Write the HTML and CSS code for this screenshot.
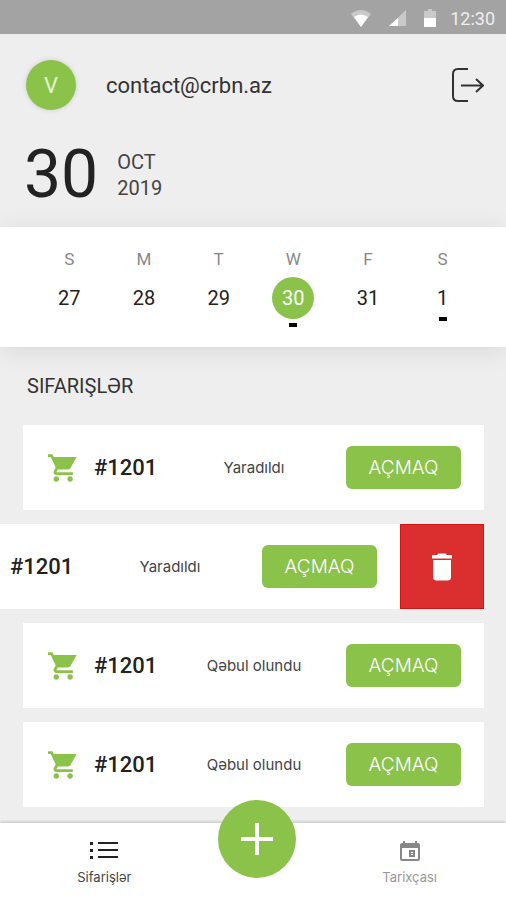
FILE: index.html
```html
<!DOCTYPE html>
<html lang="az">
<head>
  <meta charset="UTF-8" />
  <meta name="viewport" content="width=device-width, initial-scale=1.0"/>
  <title>Sifarişlər</title>
  <link rel="stylesheet" href="styles.css">
</head>
<body>
  <!-- shared icons -->
  <svg class="sprite" aria-hidden="true">
    <symbol id="cart" viewBox="1 2 21 20">
      <path d="M7 18c-1.100 0-1.990.9-1.990 2S5.900 22 7 22s2-.9 2-2-.9-2-2-2zM1 2v2h2l3.600 7.590-1.350 2.450c-.16.280-.25.610-.25.960 0 1.100.9 2 2 2h12v-2H7.420c-.14 0-.25-.11-.25-.25l.030-.12.900-1.630h7.450c.75 0 1.410-.41 1.750-1.030L21.700 4H5.210l-.94-2H1zm16 16c-1.100 0-1.990.9-1.990 2s.89 2 1.990 2 2-.9 2-2-.9-2-2-2z"/>
    </symbol>
  </svg>

  <div class="statusbar">
    <svg width="20" height="17" viewBox="0 0 20 17">
      <path d="M0 4Q10-4 20 4L10 17z" fill="#c9c9c9"/>
      <path d="M3 7Q10 2 17 7L10 17z" fill="#fff"/>
    </svg>
    <svg width="17" height="16" viewBox="0 0 17 16">
      <path d="M17 0V16H0z" fill="#c9c9c9"/>
      <path d="M9 8V16H0z" fill="#fff"/>
    </svg>
    <svg width="12" height="18" viewBox="0 0 12 18">
      <path d="M4 0h4v2h4v8H0V2h4z" fill="#c9c9c9"/>
      <path d="M0 9h12v9H0z" fill="#fff"/>
    </svg>
    <span>12:30</span>
  </div>

  <header>
    <div class="account">
      <div class="avatar">V</div>
      <span class="email">contact@crbn.az</span>
      <button class="logout" aria-label="Çıxış">
        <svg width="32" height="34" viewBox="0 0 32 34">
          <path d="M16 1H6Q1 1 1 6V28Q1 33 6 33H16M9 17.500H31M24 11L31 17.500L24 24"/>
        </svg>
      </button>
    </div>
    <div class="date">
      <span class="day-big">30</span>
      <div class="month">OCT<br>2019</div>
    </div>
  </header>

  <div class="week">
    <button class="day"><span class="letter">S</span><span class="num">27</span></button>
    <button class="day"><span class="letter">M</span><span class="num">28</span></button>
    <button class="day"><span class="letter">T</span><span class="num">29</span></button>
    <button class="day selected marked"><span class="letter">W</span><span class="num">30</span></button>
    <button class="day"><span class="letter">F</span><span class="num">31</span></button>
    <button class="day marked"><span class="letter">S</span><span class="num">1</span></button>
  </div>

  <main>
    <h1>SIFARIŞLƏR</h1>
    <ul class="orders">
      <li>
        <div class="card">
          <svg class="cart"><use href="#cart"/></svg>
          <span class="id">#1201</span>
          <span class="state">Yaradıldı</span>
          <button class="open">AÇMAQ</button>
        </div>
      </li>
      <li class="swiped">
        <div class="card">
          <svg class="cart"><use href="#cart"/></svg>
          <span class="id">#1201</span>
          <span class="state">Yaradıldı</span>
          <button class="open">AÇMAQ</button>
        </div>
        <button class="delete" aria-label="Sil">
          <svg width="22" height="28" viewBox="0 0 22 28">
            <path d="M1 2H6L7.500 0.500H14.500L16 2H21V5.500H1zM2 7H20V24Q20 27.500 16.500 27.500H5.500Q2 27.500 2 24z"/>
          </svg>
        </button>
      </li>
      <li>
        <div class="card">
          <svg class="cart"><use href="#cart"/></svg>
          <span class="id">#1201</span>
          <span class="state">Qəbul olundu</span>
          <button class="open">AÇMAQ</button>
        </div>
      </li>
      <li>
        <div class="card">
          <svg class="cart"><use href="#cart"/></svg>
          <span class="id">#1201</span>
          <span class="state">Qəbul olundu</span>
          <button class="open">AÇMAQ</button>
        </div>
      </li>
    </ul>
  </main>

  <nav>
    <a href="#" class="tab active">
      <svg width="28" height="20" viewBox="0 0 28 20">
        <path d="M0 1h3v3H0zM0 8h3v3H0zM0 15h3v3H0zM8 1h20v2H8zM8 8h20v2H8zM8 15h20v2H8z"/>
      </svg>
      Sifarişlər
    </a>
    <button class="add" aria-label="Əlavə et">
      <svg width="34" height="34" viewBox="0 0 34 34"><path d="M17 1V33M1 17H33"/></svg>
    </button>
    <a href="#" class="tab">
      <svg width="20" height="20" viewBox="0 0 20 20">
        <path fill-rule="evenodd" d="M3 0h2v2h10V0h2v2h1q2 0 2 2v14q0 2-2 2H2q-2 0-2-2V4q0-2 2-2h1zM2 7v11h16V7z"/>
        <path fill-rule="evenodd" d="M9 9h6v7H9zM11 11v1h2v-1zM11 13v1h2v-1z"/>
      </svg>
      Tarixçası
    </a>
  </nav>
</body>
</html>
```

FILE: styles.css
```css
* {
  box-sizing: border-box;
}
body {
  margin: 0;
  min-height: 100vh;
  display: flex;
  flex-direction: column;
  background: #eee;
  color: #333;
  font-family: Roboto, sans-serif;
}
button {
  border: none;
  padding: 0;
  background: none;
  color: inherit;
  font-family: inherit;
  cursor: pointer;
}
svg {
  display: block;
}
.sprite {
  position: absolute;
  width: 0;
  height: 0;
}
.statusbar {
  display: flex;
  align-items: center;
  justify-content: flex-end;
  gap: 18px;
  height: 34px;
  padding: 2px 11px 0 0;
  background: #a3a3a3;
  color: #eee;
  font-size: 18px;
}
.statusbar span {
  margin-left: -4px;
}
header {
  padding: 26px 22px 17px 26px;
}
.account {
  display: flex;
  align-items: center;
  gap: 30px;
}
.avatar {
  display: flex;
  align-items: center;
  justify-content: center;
  width: 50px;
  height: 50px;
  border-radius: 50%;
  background: #8bc34a;
  box-shadow: 0 0 5px rgba(0, 0, 0, 0.15);
  color: #e3f3cf;
  font-size: 22px;
}
.email {
  flex: 1;
  font-size: 22px;
}
.logout path {
  fill: none;
  stroke: #333;
  stroke-width: 2;
}
.date {
  display: flex;
  align-items: center;
  gap: 19px;
  margin-top: 30px;
}
.day-big {
  font-size: 66px;
  line-height: 70px;
  margin-left: -2px;
  color: #222;
}
.month {
  font-size: 20px;
  line-height: 26px;
  color: #444;
}
.week {
  display: grid;
  grid-template-columns: repeat(6, 1fr);
  height: 120px;
  padding: 22px 26px 0 32px;
  background: #fff;
  box-shadow: 0 4px 24px rgba(0, 0, 0, 0.09);
}
.day {
  display: flex;
  flex-direction: column;
  align-items: center;
}
.letter {
  font-size: 17px;
  line-height: 20px;
  color: #888;
}
.num {
  margin-top: 14px;
  font-size: 20px;
  line-height: 30px;
  color: #222;
}
.selected .num {
  width: 42px;
  margin-top: 8px;
  line-height: 42px;
  border-radius: 50%;
  background: #8bc34a;
  color: #fff;
}
.marked::after {
  content: "";
  width: 8px;
  height: 4px;
  margin-top: 4px;
  background: #000;
}
main {
  flex: 1;
}
h1 {
  margin: 27px 27px;
  font-size: 20px;
  font-weight: 400;
  line-height: 24px;
}
.orders {
  display: flex;
  flex-direction: column;
  gap: 14px;
  margin: 0;
  padding: 0 22px 16px 23px;
  overflow: hidden;
  list-style: none;
}
.orders li {
  display: flex;
}
.card {
  display: flex;
  flex: none;
  align-items: center;
  width: 100%;
  height: 85px;
  padding: 0 23px 0 25px;
  background: #fff;
}
.swiped .card {
  margin-left: -84px;
}
.cart {
  width: 29px;
  height: 28px;
  margin-right: 17px;
  fill: #8bc34a;
}
.id {
  min-width: 68px;
  font-size: 22px;
  font-weight: 500;
  color: #222;
}
.state {
  flex: 1;
  color: #444;
  font-family: Inter, sans-serif;
  font-size: 15px;
  text-align: center;
}
.open {
  width: 115px;
  height: 43px;
  border-radius: 6px;
  background: #8bc34a;
  color: #fff;
  font-family: Inter, sans-serif;
  font-size: 19px;
  font-weight: 300;
}
.delete {
  display: flex;
  align-items: center;
  justify-content: center;
  flex: none;
  width: 84px;
  background: #db2f2f;
  border: 1px solid #d21414;
}
.delete path {
  fill: #fff;
}
nav {
  position: sticky;
  bottom: 0;
  display: grid;
  grid-template-columns: repeat(3, 1fr);
  height: 77px;
  padding: 0 20px 0 28px;
  background: #fff;
  box-shadow: 0 -1px 3px rgba(0, 0, 0, 0.2);
}
.tab {
  display: flex;
  flex-direction: column;
  align-items: center;
  gap: 6px;
  padding-top: 18px;
  color: #999;
  fill: #888;
  font-family: Inter, sans-serif;
  font-size: 13px;
  line-height: 20px;
  text-decoration: none;
}
.tab.active {
  color: #444;
  fill: #222;
}
.add {
  display: flex;
  align-items: center;
  justify-content: center;
  justify-self: center;
  width: 78px;
  height: 78px;
  margin-top: -23px;
  border-radius: 50%;
  background: #8bc34a;
}
.add path {
  stroke: #fff;
  stroke-width: 4;
}
```
